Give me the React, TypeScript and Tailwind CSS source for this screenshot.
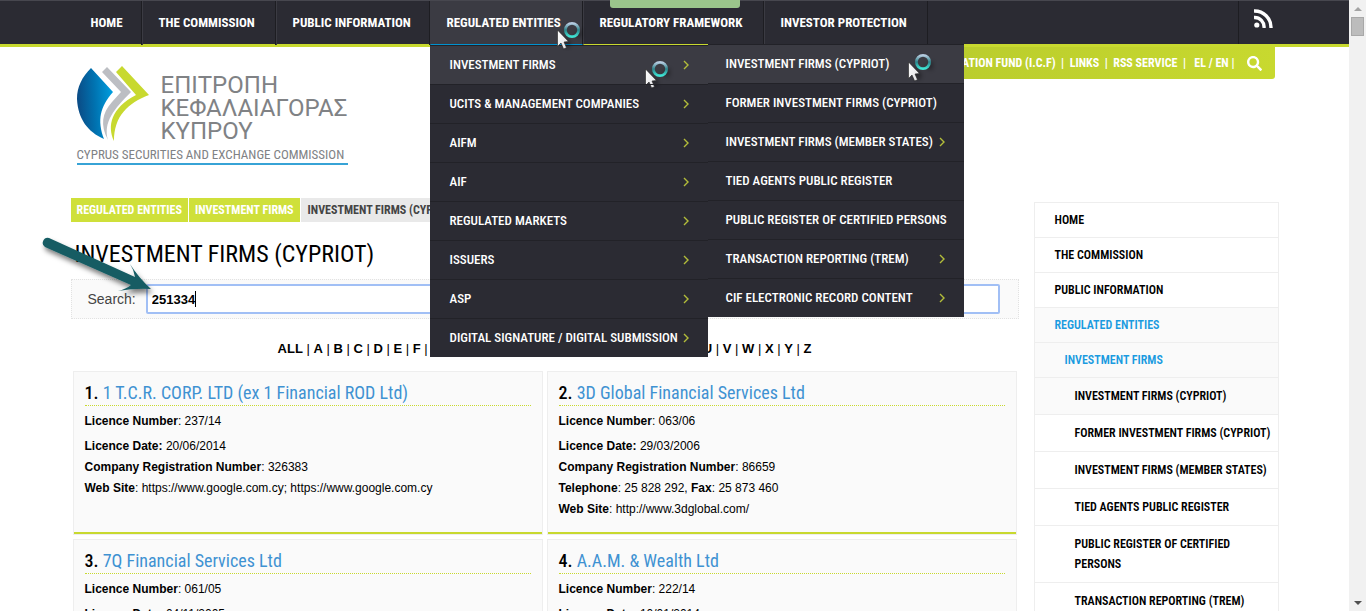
import { useState } from 'react'
import { FaSearch } from 'react-icons/fa'

const firmsMenu = [
  { label: 'INVESTMENT FIRMS (CYPRIOT)', sub: false },
  { label: 'FORMER INVESTMENT FIRMS (CYPRIOT)', sub: false },
  { label: 'INVESTMENT FIRMS (MEMBER STATES)', sub: true },
  { label: 'TIED AGENTS PUBLIC REGISTER', sub: false },
  { label: 'PUBLIC REGISTER OF CERTIFIED PERSONS', sub: false },
  { label: 'TRANSACTION REPORTING (TREM)', sub: true },
  { label: 'CIF ELECTRONIC RECORD CONTENT', sub: true },
]

const entitiesMenu = [
  'INVESTMENT FIRMS',
  'UCITS & MANAGEMENT COMPANIES',
  'AIFM',
  'AIF',
  'REGULATED MARKETS',
  'ISSUERS',
  'ASP',
  'DIGITAL SIGNATURE / DIGITAL SUBMISSION',
]

const firms = [
  {
    name: '1 T.C.R. CORP. LTD (ex 1 Financial ROD Ltd)',
    licence: '237/14',
    date: '20/06/2014',
    registration: '326383',
    site: 'https://www.google.com.cy; https://www.google.com.cy',
  },
  {
    name: '3D Global Financial Services Ltd',
    licence: '063/06',
    date: '29/03/2006',
    registration: '86659',
    phone: '25 828 292',
    fax: '25 873 460',
    site: 'http://www.3dglobal.com/',
  },
  { name: '7Q Financial Services Ltd', licence: '061/05', date: '04/11/2005' },
  { name: 'A.A.M. & Wealth Ltd', licence: '222/14', date: '10/01/2014' },
]

const sideTop = ['HOME', 'THE COMMISSION', 'PUBLIC INFORMATION']
const sideFirms = [
  'INVESTMENT FIRMS (CYPRIOT)',
  'FORMER INVESTMENT FIRMS (CYPRIOT)',
  'INVESTMENT FIRMS (MEMBER STATES)',
  'TIED AGENTS PUBLIC REGISTER',
  'PUBLIC REGISTER OF CERTIFIED PERSONS',
  'TRANSACTION REPORTING (TREM)',
]

const letters = ['ALL', ...'ABCDEFGHIJKLMNOPQRSTUVWXYZ']

function Chevron() {
  return (
    <svg width="6" height="10" viewBox="0 0 6 10" fill="none" stroke="#b3bd3a" strokeWidth="1.4" aria-hidden="true">
      <path d="M1 1 L5 5 L1 9" />
    </svg>
  )
}

function BusyCursor() {
  return (
    <svg width="32" height="30" viewBox="0 0 32 30" aria-hidden="true">
      <defs>
        <linearGradient id="ring" x1="0" y1="0" x2="0" y2="1">
          <stop offset="0" stopColor="#b5cbe0" />
          <stop offset="0.5" stopColor="#2c8289" />
          <stop offset="1" stopColor="#3fe3d3" />
        </linearGradient>
        <linearGradient id="pointer" x1="0" y1="0" x2="1" y2="1">
          <stop offset="0" stopColor="#ffffff" />
          <stop offset="1" stopColor="#dedee2" />
        </linearGradient>
        <filter id="soft" x="-50%" y="-50%" width="200%" height="200%">
          <feGaussianBlur stdDeviation="2" />
        </filter>
      </defs>
      <path d="M4 13 L14 22 L10 28 Z M17 14 L25 8 L24 17 Z" fill="#000" opacity="0.4" filter="url(#soft)" />
      <circle cx="15" cy="9" r="6.6" fill="none" stroke="url(#ring)" strokeWidth="2.8" />
      <path
        d="M0.5 9 L0.5 25.5 L4 22 L6.6 28 L9.500 26.700 L7 21 L11.500 20.5 Z"
        fill="url(#pointer)"
        stroke="#222"
        strokeWidth="0.6"
      />
    </svg>
  )
}

function Logo() {
  return (
    <a href="#home" className="flex w-[271px] flex-col text-[#808285]">
      <span className="flex gap-3">
        <svg width="72" height="76" viewBox="0 0 72 76" className="shrink-0" aria-hidden="true">
          <defs>
            <linearGradient id="leaf" x1="0" y1="0.5" x2="1" y2="0.4">
              <stop offset="0" stopColor="#0b4a84" />
              <stop offset="0.5" stopColor="#0073b1" />
              <stop offset="1" stopColor="#009fe0" />
            </linearGradient>
          </defs>
          <path d="M14 2 C5 11 0 21 0 33 C1 53 11 66 27 73 C20 54 23 41 36 26 Z" fill="url(#leaf)" />
          <path
            d="M30 1 L54 26 C37 43 26 56 31 74 C23 59 25 47 35 36 L44 26 L25 6 Z"
            fill="#bcbec3"
          />
          <path d="M45 0 L72 29 C51 37 37 50 37 75 C30 60 34 42 59 29 L39 6 Z" fill="#c8d92f" />
        </svg>
        <span className="pt-2 font-['Roboto',sans-serif] text-2xl leading-[23px]">
          ΕΠΙΤΡΟΠΗ
          <br />
          ΚΕΦΑΛΑΙΑΓΟΡΑΣ
          <br />
          ΚΥΠΡΟΥ
        </span>
      </span>
      <span className="mt-1 whitespace-nowrap border-b-2 border-[#37a3d6] text-[13px] leading-4">
        CYPRUS SECURITIES AND EXCHANGE COMMISSION
      </span>
    </a>
  )
}

const navItem = 'flex h-11 items-center border-l border-l-[#3b3b43] border-r border-r-[#1d1d22] px-4'

function TopNav() {
  return (
    <header className="border-t border-t-[#47474f] border-b-[3px] border-b-[#c8d92f] bg-[#2b2b33]">
      <div className="mx-auto flex h-[43px] max-w-[1208px] justify-between">
        <nav className="ml-1 flex whitespace-nowrap text-[13px] font-bold text-white">
          <a href="#home" className="flex h-11 w-[67px] items-center border-r border-r-[#1d1d22] pl-4">
            HOME
          </a>
          <a href="#commission" className={`${navItem} w-[134px]`}>
            THE COMMISSION
          </a>
          <a href="#information" className={`${navItem} w-[154px]`}>
            PUBLIC INFORMATION
          </a>
          <div className="relative z-20">
            <a href="#entities" className={`${navItem} w-[153px] border-b border-b-[#0092d0] bg-[#3b3b43]`}>
              REGULATED ENTITIES
            </a>
            <div className="absolute top-5 left-[127px] z-30">
              <BusyCursor />
            </div>
            <EntitiesMenu />
          </div>
          <div className="relative z-10">
            <a href="#framework" className={`${navItem} w-[181px] border-b border-b-[#c8d92f]`}>
              REGULATORY FRAMEWORK
            </a>
            <div className="absolute -top-px left-[27px] h-2 w-[130px] rounded-b-[3px] bg-[#9ac58b]" />
          </div>
          <a href="#protection" className={`${navItem} w-[164px]`}>
            INVESTOR PROTECTION
          </a>
        </nav>
        <a
          href="#rss"
          aria-label="RSS"
          className="mr-[6px] flex h-[43px] w-[35px] items-start justify-end border-l border-l-[#1d1d22] pt-2"
        >
          <svg width="19" height="19" viewBox="0 0 19 19" fill="none" stroke="#fff" className="shrink-0" aria-hidden="true">
            <circle cx="2.8" cy="16" r="2.6" fill="#fff" stroke="none" />
            <path d="M0 8.5 A9.5 9.5 0 0 1 10 19" strokeWidth="3.4" />
            <path d="M0 2 A16.5 16.5 0 0 1 17 19" strokeWidth="3.4" />
          </svg>
        </a>
      </div>
    </header>
  )
}

function EntitiesMenu() {
  return (
    <div className="absolute top-[43px] left-0 flex items-start text-[13px] font-medium">
      <ul className="mt-px w-[278px] bg-[#2b2b33]">
        {entitiesMenu.map((label, i) => (
          <li
            key={label}
            className={`relative h-[39px] border-t border-t-[#222228] ${i === 0 ? 'bg-[#3b3b43]' : ''}`}
          >
            <a href="#menu" className="flex h-full items-center justify-between pr-[19px] pl-5">
              {label}
              <Chevron />
            </a>
            {i === 0 && (
              <div className="absolute top-[14px] left-[215px]">
                <BusyCursor />
              </div>
            )}
          </li>
        ))}
      </ul>
      <ul className="w-[256px] bg-[#2b2b33]">
        {firmsMenu.map((item, i) => (
          <li
            key={item.label}
            className={`relative h-[39px] border-t border-t-[#222228] ${i === 0 ? 'bg-[#3b3b43]' : ''}`}
          >
            <a href="#menu" className="flex h-full items-center justify-between pr-[19px] pl-[18px]">
              {item.label}
              {item.sub && <Chevron />}
            </a>
            {i === 0 && (
              <div className="absolute top-2 left-[200px]">
                <BusyCursor />
              </div>
            )}
          </li>
        ))}
      </ul>
    </div>
  )
}

function UtilityBar() {
  return (
    <div className="mr-1 flex h-8 w-[480px] items-center justify-end rounded-br-[3px] bg-linear-to-r from-[#b3c72c] to-[#c8d92f] pr-[13px] text-xs font-bold whitespace-pre text-white">
      <a href="#fund">INVESTOR COMPENSATION FUND (I.C.F)</a>
      {'  |  '}
      <a href="#links">LINKS</a>
      {'  |  '}
      <a href="#rss">RSS SERVICE</a>
      {'  |   '}
      <a href="#el">EL</a>
      {' / '}
      <a href="#en">EN</a>
      {' |'}
      <button type="button" aria-label="Search" className="ml-3">
        <FaSearch size={15} />
      </button>
    </div>
  )
}

function PointerArrow() {
  return (
    <svg width="120" height="70" viewBox="0 0 120 70" className="pointer-events-none" aria-hidden="true">
      <defs>
        <filter id="drop" x="-20%" y="-20%" width="150%" height="160%">
          <feDropShadow dx="2" dy="4" stdDeviation="2.5" floodColor="#000" floodOpacity="0.5" />
        </filter>
      </defs>
      <path
        d="M9 3 L95 42 Q94 35 90 29 Q98 42 111 54 Q95 53 78 56 Q86 54 91 50 L5 12 A5 5 0 0 1 9 3 Z"
        fill="#145c63"
        filter="url(#drop)"
      />
    </svg>
  )
}

type Firm = {
  name: string
  licence: string
  date: string
  registration?: string
  phone?: string
  fax?: string
  site?: string
}

function FirmCard({ firm, index }: { firm: Firm; index: number }) {
  return (
    <article className="h-[164px] border border-[#eeeeee] bg-[#fafafa] px-[11px] pt-[9px] shadow-[inset_0_-2px_0_#c8d92f]">
      <h2 className="border-b border-dotted border-[#c8d92f] text-lg leading-6 font-medium">
        {index + 1}.{' '}
        <a href="#firm" className="font-normal text-[#3f92d2]">
          {firm.name}
        </a>
      </h2>
      <div className="pt-[5px] font-['Liberation_Sans',sans-serif] text-xs leading-[21px]">
        <p className="mb-1">
          <b>Licence Number</b>: {firm.licence}
        </p>
        <p>
          <b>Licence Date:</b> {firm.date}
        </p>
        {firm.registration && (
          <p>
            <b>Company Registration Number</b>: {firm.registration}
          </p>
        )}
        {firm.phone && (
          <p>
            <b>Telephone</b>: {firm.phone}, <b>Fax</b>: {firm.fax}
          </p>
        )}
        {firm.site && (
          <p>
            <b>Web Site</b>: {firm.site}
          </p>
        )}
      </div>
    </article>
  )
}

function Sidebar() {
  return (
    <aside className="mt-1 w-[245px] shrink-0 self-start border border-b-0 border-[#eeeeee] text-xs leading-5 font-semibold">
      <ul>
        {sideTop.map((label) => (
          <li key={label} className="h-[35px] border-b border-[#eeeeee] pt-[7px] pl-5">
            <a href="#side">{label}</a>
          </li>
        ))}
        <li className="h-[35px] border-b border-[#eeeeee] bg-[#fafafa] pt-[7px] pl-5 text-[#1a9be0]">
          <a href="#side">REGULATED ENTITIES</a>
        </li>
        <li className="h-[35px] border-b border-[#eeeeee] bg-[#fafafa] pt-[7px] pl-[30px] text-[#1a9be0]">
          <a href="#side">INVESTMENT FIRMS</a>
        </li>
        {sideFirms.map((label, i) => (
          <li
            key={label}
            className={`border-b border-[#eeeeee] py-2 pr-1 pl-10 ${i === 0 ? 'bg-[#fafafa]' : ''}`}
          >
            <a href="#side">{label}</a>
          </li>
        ))}
      </ul>
    </aside>
  )
}

function Scrollbar() {
  return (
    <div className="flex w-[17px] shrink-0 flex-col items-center justify-between bg-[#f1f1f1] pt-[7px] pb-[6px]">
      <div className="flex flex-col items-center gap-[6px]">
        <svg width="8" height="4" viewBox="0 0 8 4" aria-hidden="true">
          <path d="M0 4 L4 0 L8 4 Z" fill="#a3a3a3" />
        </svg>
        <div className="h-[19px] w-[13px] border border-[#a8a8a8] bg-[#bcbcbc]" />
      </div>
      <svg width="8" height="4" viewBox="0 0 8 4" aria-hidden="true">
        <path d="M0 0 L4 4 L8 0 Z" fill="#505050" />
      </svg>
    </div>
  )
}

export default function App() {
  const [query, setQuery] = useState('251334')

  return (
    <div className="flex h-screen overflow-hidden bg-white font-['Roboto_Condensed','Liberation_Sans_Narrow',Roboto,sans-serif] text-black">
      <div className="min-w-0 flex-1">
        <TopNav />
        <div className="mx-auto max-w-[1208px]">
          <div className="flex h-[151px] items-start justify-between">
            <div className="pt-[19px] pl-[6px]">
              <Logo />
            </div>
            <UtilityBar />
          </div>
          <div className="flex justify-between">
            <main className="w-[948px]">
              <div className="flex gap-px text-xs leading-6 font-bold text-white">
                <a href="#crumb" className="bg-[#cfe03a] px-[6px]">
                  REGULATED ENTITIES
                </a>
                <a href="#crumb" className="bg-[#cfe03a] px-[6px]">
                  INVESTMENT FIRMS
                </a>
                <span className="bg-[#e9e9e9] px-[7px] text-[#444444]">INVESTMENT FIRMS (CYPRIOT)</span>
              </div>
              <h1 className="mt-4 pl-1 text-2xl leading-8">INVESTMENT FIRMS (CYPRIOT)</h1>
              <div className="relative mt-[9px] flex h-10 items-center gap-[10px] border border-dotted border-[#e2e2e2] bg-[#fafafa] pr-[18px] pl-4">
                <label htmlFor="search" className="font-['Liberation_Sans',sans-serif] text-sm text-[#444444]">
                  Search:
                </label>
                <div className="flex h-[30px] min-w-0 flex-1 items-center rounded-xs border-2 border-[#a1bff5] bg-white pl-1">
                  <input
                    id="search"
                    type="text"
                    value={query}
                    onChange={(e) => setQuery(e.target.value)}
                    className="field-sizing-content h-full font-['Liberation_Sans',sans-serif] text-[13px] font-bold caret-transparent outline-none"
                  />
                  <span className="h-4 w-px bg-black" />
                </div>
                <div className="absolute -top-[45px] -left-8">
                  <PointerArrow />
                </div>
              </div>
              <p className="mt-5 text-center font-['Liberation_Sans',sans-serif] text-[13px] leading-5 font-bold">
                {letters.map((letter, i) => (
                  <span key={letter}>
                    {i > 0 && <span className="font-normal"> | </span>}
                    <a href="#letter">{letter}</a>
                  </span>
                ))}
              </p>
              <div className="mt-3 grid grid-cols-2 gap-1 px-[2px]">
                {firms.map((firm, i) => (
                  <FirmCard key={firm.name} firm={firm} index={i} />
                ))}
              </div>
            </main>
            <Sidebar />
          </div>
        </div>
      </div>
      <Scrollbar />
    </div>
  )
}
